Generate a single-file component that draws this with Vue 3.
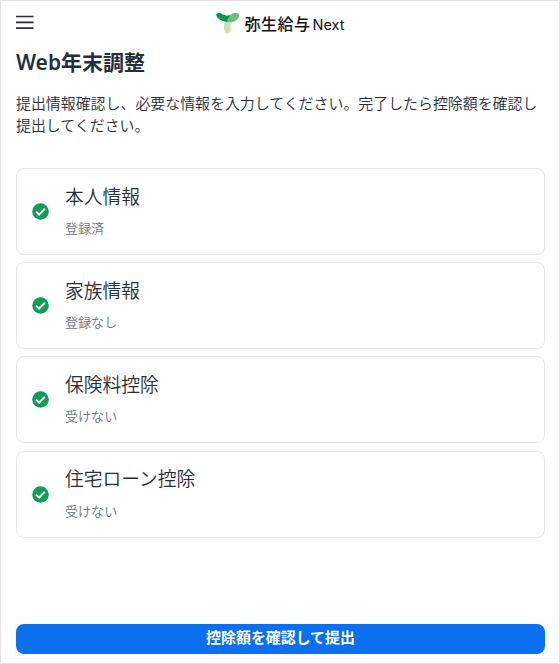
<script setup>
import { ref } from 'vue';

const sections = ref([
  { id: 'self', title: '本人情報', status: '登録済' },
  { id: 'family', title: '家族情報', status: '登録なし' },
  { id: 'insurance', title: '保険料控除', status: '受けない' },
  { id: 'loan', title: '住宅ローン控除', status: '受けない' }
]);
</script>

<template>
  <div class="page">
    <header class="top-bar">
      <button type="button" class="menu-btn" aria-label="メニュー">
        <svg width="18" height="15" viewBox="0 0 18 15">
          <path d="M0 1.500h17.500M0 7.300h17.500M0 13.200h17.500" stroke="#272e3b" stroke-width="1.7" fill="none" />
        </svg>
      </button>
      <div class="brand">
        <svg class="brand-mark" width="24" height="22" viewBox="0 0 24 22">
          <path
            d="M9.200 20.300c1.400 1.500 4.600 1 5.300-.8.700-1.900-.3-3.900.1-6 .3-1.500 1.200-2.500 2.400-3.400L14.500 6.500c-3.200 1.200-5.800 3.400-6.400 6.700-.4 2.400 0 5.600 1.100 7.100z"
            fill="#c5e3b4"
          />
          <path
            d="M9.900 9.200c1.300-3.100 3.300-6.300 6.700-7.800 2.600-1.100 6.200-.9 6.600 1.600.4 2.400-2.100 5.200-5 6.200-2.900 1.100-5.500 1.200-8.300 0z"
            fill="#6fbd7c"
          />
          <path
            d="M.8 1.700c1.400-1.300 3.500-.7 5.300.3 2.100 1.200 3.900 1.800 6.600 1.400.7-.1 1.400-.3 2-.7-1.700 2-2.900 4.600-3.800 7.200C6.800 9.300 1.800 7.700.5 4.100.2 3.200.2 2.300.8 1.700z"
            fill="#009b45"
          />
        </svg>
        <span class="brand-name">弥生給与</span>
        <span class="brand-sub">Next</span>
      </div>
    </header>

    <main class="content">
      <h1>Web年末調整</h1>
      <p class="lead">提出情報確認し、必要な情報を入力してください。完了したら控除額を確認し提出してください。</p>

      <ul class="section-list">
        <li v-for="section in sections" :key="section.id" class="section-card">
          <svg class="check" width="17" height="17" viewBox="0 0 17 17">
            <circle cx="8.5" cy="8.5" r="8.3" fill="#0f9d58" />
            <path d="M4 8.600l3.100 3L12.800 5.800" stroke="#fff" stroke-width="2" fill="none" />
          </svg>
          <div class="section-text">
            <h2>{{ section.title }}</h2>
            <p>{{ section.status }}</p>
          </div>
        </li>
      </ul>
    </main>

    <footer class="actions">
      <button type="button" class="submit-btn">控除額を確認して提出</button>
    </footer>
  </div>
</template>

<style>
body {
  margin: 0;
  background: #fff;
}
</style>

<style scoped>
.page {
  display: flex;
  flex-direction: column;
  box-sizing: border-box;
  width: 100%;
  height: 664px;
  padding: 0 14px 9px 15px;
  border: 1px solid #e3e2e2;
  background: #fff;
  color: #272e3b;
  font-family: "Noto Sans CJK JP", sans-serif;
}

.top-bar {
  display: grid;
  grid-template-columns: 1fr auto 1fr;
  align-items: center;
  height: 42px;
}

.menu-btn {
  display: flex;
  justify-self: start;
  padding: 0;
  border: none;
  background: none;
  cursor: pointer;
}

.brand {
  display: flex;
  align-items: center;
  color: #111;
  white-space: nowrap;
}

.brand-mark {
  margin: 2px 4px 0 0;
}

.brand-name {
  margin-top: 2px;
  font-size: 16px;
  line-height: 22px;
  font-weight: 500;
  letter-spacing: 0.5px;
}

.brand-sub {
  margin: 5px 0 0 2px;
  font-family: Inter, sans-serif;
  font-size: 14.5px;
  line-height: 20px;
}

.content {
  flex: 1;
}

h1 {
  margin: 5px 0 0;
  font-family: "Noto Sans", "Noto Sans CJK JP", sans-serif;
  font-size: 21px;
  line-height: 28px;
  font-weight: 600;
}

.lead {
  margin: 16px 0 0;
  font-size: 14.93px;
  line-height: 22.4px;
  font-weight: 350;
}

.section-list {
  display: flex;
  flex-direction: column;
  gap: 7.25px;
  margin: 31px 0 0;
  padding: 0;
  list-style: none;
}

.section-card {
  display: flex;
  align-items: center;
  gap: 16px;
  box-sizing: border-box;
  height: 87px;
  padding: 0 15px;
  border: 1px solid #e5e7eb;
  border-radius: 8px;
}

.section-text h2 {
  margin: -3.3px 0 0;
  font-size: 18.75px;
  line-height: 28px;
  font-weight: 350;
}

.section-text p {
  margin: 8.3px 0 0;
  color: #6b7280;
  font-size: 13.07px;
  line-height: 20px;
  font-weight: 350;
}

.submit-btn {
  display: block;
  width: 100%;
  height: 30px;
  padding: 0 0 4px;
  border: none;
  border-radius: 8px;
  background: #0b70ef;
  color: #fff;
  font-family: inherit;
  font-size: 14.93px;
  line-height: 22px;
  font-weight: 700;
  cursor: pointer;
}
</style>
